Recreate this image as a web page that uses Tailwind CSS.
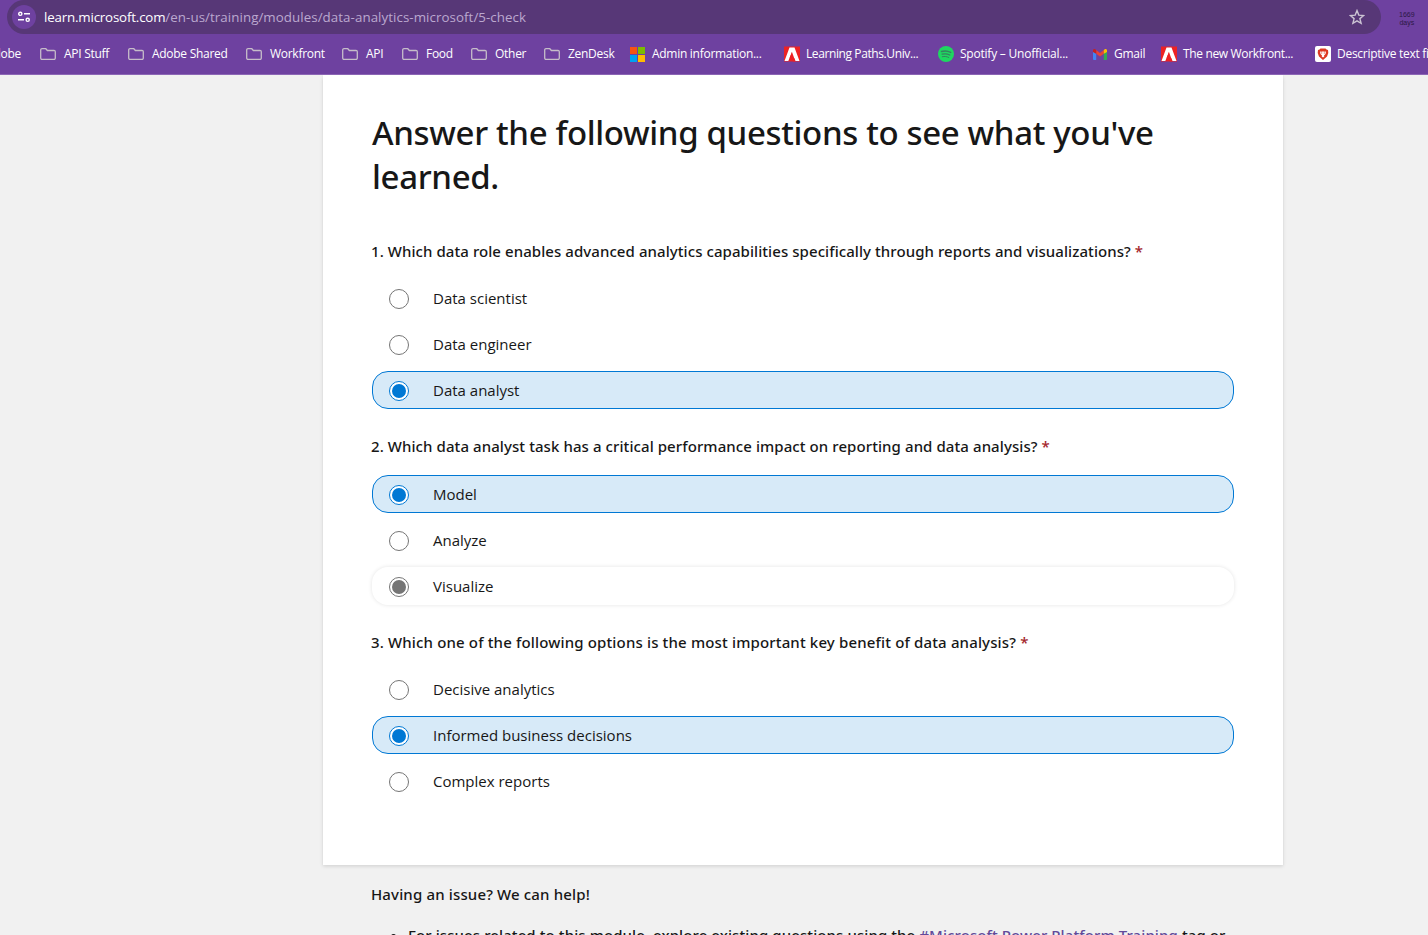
<!DOCTYPE html>
<html lang="en">
<head>
  <meta charset="UTF-8" />
  <title>Check your knowledge - Training | Microsoft Learn</title>
  <script src="https://cdn.jsdelivr.net/npm/@tailwindcss/browser@4"></script>
</head>
<body class="h-[935px] overflow-hidden bg-[#f1f1f1] font-['Open_Sans','Noto_Sans',sans-serif] text-[#171717]">

  <!-- Shared icons -->
  <svg class="hidden">
    <symbol id="folder" viewBox="0 0 16 12">
      <path d="M2 .7h3.8l1.6 1.8H14a1.3 1.3 0 0 1 1.3 1.3V10a1.3 1.3 0 0 1-1.3 1.3H2A1.3 1.3 0 0 1 .7 10V2A1.3 1.3 0 0 1 2 .7z" fill="none" stroke="#c6bdc9" stroke-width="1.3" />
    </symbol>
    <symbol id="adobe" viewBox="0 0 16 16">
      <path d="M0 .5h16v15H0z" fill="#ed2224" />
      <path d="M5.500 1.500h5l5 13.500h-4l-1.300-3H7.800L8 5.800 4.300 15H.5z" fill="#fff" />
      <path d="M8 6l3.400 9.500H9l-1.200-3.200H5.500z" fill="#ed2224" />
    </symbol>
  </svg>

  <!-- Browser bar -->
  <header class="h-[75px] overflow-hidden border-b border-[#8c66b5] bg-[#6e41a0] text-white">
    <div class="flex h-[34px] items-center pl-[7px]">
      <div class="flex h-[34px] w-[1374px] flex-none items-center rounded-r-full rounded-l-full bg-[#573777] pl-[5px]">
        <span class="flex size-6 items-center justify-center rounded-full bg-[#6e41a0]">
          <svg class="size-3" viewBox="0 0 12 12" fill="none" stroke="#fff" stroke-width="1.4">
            <circle cx="2.300" cy="2.800" r="1.600" /><path d="M6 2.800h6M0 8.800h6" /><circle cx="9.700" cy="8.800" r="1.600" />
          </svg>
        </span>
        <p class="mt-px ml-2 text-[13.33px] whitespace-nowrap text-[#bba8cf]"><span class="tracking-[-0.18px] text-white">learn.microsoft.com</span><span class="tracking-[0.06px]">/en-us/training/modules/data-analytics-microsoft/5-check</span></p>
        <svg class="mr-4 ml-auto size-4" viewBox="0 0 16 16" fill="none" stroke="#cbc3d3" stroke-width="1.400">
          <path d="M8 1.600l1.800 4.500 4.800.4-3.700 3.100 1.200 4.700L8 11.800l-4.100 2.500 1.200-4.700L1.400 6.500l4.800-.4z" />
        </svg>
      </div>
      <p class="mt-1 ml-[18px] text-center font-['Liberation_Sans',sans-serif] text-[7px] leading-[8px] text-[#2c1845]">1669<br />days</p>
    </div>

    <nav class="flex h-10 items-center text-[12px] tracking-[-0.28px] whitespace-nowrap">
      <div class="flex w-10 flex-none justify-end overflow-hidden pr-[19px]">Adobe</div>
      <a class="flex w-[88px] flex-none items-center gap-2"><svg class="h-3 w-4 flex-none"><use href="#folder" /></svg>API Stuff</a>
      <a class="flex w-[118px] flex-none items-center gap-2"><svg class="h-3 w-4 flex-none"><use href="#folder" /></svg>Adobe Shared</a>
      <a class="flex w-[96px] flex-none items-center gap-2"><svg class="h-3 w-4 flex-none"><use href="#folder" /></svg>Workfront</a>
      <a class="flex w-[60px] flex-none items-center gap-2"><svg class="h-3 w-4 flex-none"><use href="#folder" /></svg>API</a>
      <a class="flex w-[69px] flex-none items-center gap-2"><svg class="h-3 w-4 flex-none"><use href="#folder" /></svg>Food</a>
      <a class="flex w-[73px] flex-none items-center gap-2"><svg class="h-3 w-4 flex-none"><use href="#folder" /></svg>Other</a>
      <a class="flex w-[86px] flex-none items-center gap-2"><svg class="h-3 w-4 flex-none"><use href="#folder" /></svg>ZenDesk</a>
      <a class="flex w-[154px] flex-none items-center gap-[7px]">
        <span class="grid size-[15px] grid-cols-2 gap-px"><i class="bg-[#f65314]"></i><i class="bg-[#7cbb00]"></i><i class="bg-[#00a1f1]"></i><i class="bg-[#ffbb00]"></i></span>
        Admin information...
      </a>
      <a class="flex w-[154px] flex-none items-center gap-1.5 tracking-[-0.4px]"><svg class="size-4 flex-none"><use href="#adobe" /></svg>Learning Paths.Univ...</a>
      <a class="flex w-[155px] flex-none items-center gap-1.5 tracking-[-0.22px]">
        <svg class="size-4 flex-none" viewBox="0 0 16 16" fill="none" stroke="#35805f" stroke-linecap="round">
          <circle cx="8" cy="8" r="8" fill="#1ed760" stroke="none" />
          <path d="M3.500 5.500c3-.9 6.500-.6 9.200.9" stroke-width="1.500" /><path d="M4 8.200c2.700-.7 5.500-.4 7.800.9" stroke-width="1.200" /><path d="M4.300 10.700c2.300-.5 4.600-.3 6.500.8" stroke-width="1" />
        </svg>
        Spotify – Unofficial...
      </a>
      <a class="flex w-[68px] flex-none items-center gap-[7px]">
        <svg class="h-[11px] w-3.5 flex-none" viewBox="0 0 14 11">
          <path d="M0 2l3.200 2.400V11H1a1 1 0 0 1-1-1z" fill="#4285f4" />
          <path d="M14 2l-3.200 2.400V11H13a1 1 0 0 0 1-1z" fill="#34a853" />
          <path d="M3.200 1L7 3.900 10.800 1v3.700L7 7.600 3.200 4.700z" fill="#ea4335" />
          <path d="M0 3V1.500C0 .2 1.400-.4 2.500.4l.7.600v3.700L0 2.900z" fill="#c5221f" />
          <path d="M14 3V1.500c0-1.300-1.400-1.900-2.500-1.100l-.7.600v3.700L14 2.900z" fill="#fbbc04" />
        </svg>
        Gmail
      </a>
      <a class="flex w-[154px] flex-none items-center gap-1.5 tracking-[-0.35px]"><svg class="size-4 flex-none"><use href="#adobe" /></svg>The new Workfront...</a>
      <a class="flex flex-none items-center gap-1.5">
        <svg class="size-4 flex-none" viewBox="0 0 16 16">
          <rect width="16" height="16" rx="2" fill="#fff" />
          <path d="M5.500 2.500h5l1 .9 1.500.6.300 3-1.300 3.500L8 14l-4-3.500L2.700 7 3 4l1.500-.6z" fill="#dd3a22" />
          <path d="M5 5.500l2 .3 1-.5 1 .5 2-.3-.5 2.500L9 9.500l.3 1L8 11.500l-1.300-1 .3-1L5.500 8z" fill="#fff" />
          <path d="M6 7h1.300M8.700 7H10" stroke="#dd3a22" stroke-width=".8" />
        </svg>
        Descriptive text finder
      </a>
    </nav>
  </header>

  <!-- Quiz card -->
  <main class="ml-[323px] h-[790px] w-[960px] bg-white px-[49px] pt-9 shadow-[0_1.6px_3.6px_rgba(0,0,0,0.13),0_0.3px_1px_rgba(0,0,0,0.11)]">
    <h1 class="h-[128px] font-['Noto_Sans',sans-serif] text-[33px] leading-[44px] font-medium tracking-[-0.35px] whitespace-nowrap">Answer the following questions to see what you've<br />learned.</h1>

    <form>
      <section>
        <h2 class="-ml-px mb-4 font-['Noto_Sans',sans-serif] text-[15px] leading-6 font-medium tracking-[0.07px] whitespace-nowrap">1. Which data role enables advanced analytics capabilities specifically through reports and visualizations? <span class="text-[#a4262c]">*</span></h2>
        <div class="space-y-2 text-[15px]">
          <label class="flex h-[38px] items-center gap-6 rounded-2xl border border-transparent px-4"><span class="mt-0.5 size-5 rounded-full border border-[#757575] bg-white"></span>Data scientist</label>
          <label class="flex h-[38px] items-center gap-6 rounded-2xl border border-transparent px-4"><span class="mt-0.5 size-5 rounded-full border border-[#757575] bg-white"></span>Data engineer</label>
          <label class="flex h-[38px] items-center gap-6 rounded-2xl border border-[#0078d4] bg-[#d7eaf8] px-4"><span class="mt-0.5 flex size-5 items-center justify-center rounded-full border border-[#0078d4] bg-white"><i class="size-3.5 rounded-full bg-[#0078d4]"></i></span>Data analyst</label>
        </div>
      </section>

      <section class="mt-[25px]">
        <h2 class="-ml-px mb-[17px] font-['Noto_Sans',sans-serif] text-[15px] leading-6 font-medium tracking-[0.08px] whitespace-nowrap">2. Which data analyst task has a critical performance impact on reporting and data analysis? <span class="text-[#a4262c]">*</span></h2>
        <div class="space-y-2 text-[15px]">
          <label class="flex h-[38px] items-center gap-6 rounded-2xl border border-[#0078d4] bg-[#d7eaf8] px-4"><span class="mt-0.5 flex size-5 items-center justify-center rounded-full border border-[#0078d4] bg-white"><i class="size-3.5 rounded-full bg-[#0078d4]"></i></span>Model</label>
          <label class="flex h-[38px] items-center gap-6 rounded-2xl border border-transparent px-4"><span class="mt-0.5 size-5 rounded-full border border-[#757575] bg-white"></span>Analyze</label>
          <label class="flex h-[38px] items-center gap-6 rounded-2xl border border-transparent px-4 shadow-[0_0_4px_rgba(0,0,0,0.11)]"><span class="mt-0.5 flex size-5 items-center justify-center rounded-full border border-[#757575] bg-white"><i class="size-3.5 rounded-full bg-[#757575]"></i></span>Visualize</label>
        </div>
      </section>

      <section class="mt-[25px]">
        <h2 class="-ml-px mb-4 font-['Noto_Sans',sans-serif] text-[15px] leading-6 font-medium tracking-[0.15px] whitespace-nowrap">3. Which one of the following options is the most important key benefit of data analysis? <span class="text-[#a4262c]">*</span></h2>
        <div class="space-y-2 text-[15px]">
          <label class="flex h-[38px] items-center gap-6 rounded-2xl border border-transparent px-4"><span class="mt-0.5 size-5 rounded-full border border-[#757575] bg-white"></span>Decisive analytics</label>
          <label class="flex h-[38px] items-center gap-6 rounded-2xl border border-[#0078d4] bg-[#d7eaf8] px-4"><span class="mt-0.5 flex size-5 items-center justify-center rounded-full border border-[#0078d4] bg-white"><i class="size-3.5 rounded-full bg-[#0078d4]"></i></span>Informed business decisions</label>
          <label class="flex h-[38px] items-center gap-6 rounded-2xl border border-transparent px-4"><span class="mt-0.5 size-5 rounded-full border border-[#757575] bg-white"></span>Complex reports</label>
        </div>
      </section>
    </form>
  </main>

  <!-- Help -->
  <footer class="ml-[371px] pt-[17px] font-['Noto_Sans',sans-serif] text-[15px] leading-6 font-medium whitespace-nowrap">
    <p class="tracking-[0.15px]">Having an issue? We can help!</p>
    <ul class="mt-[17px] list-disc pl-[37px] tracking-[0.09px]">
      <li>For issues related to this module, explore existing questions using the <a class="text-[#624a9a]">#Microsoft Power Platform Training</a> tag or</li>
    </ul>
  </footer>
</body>
</html>
